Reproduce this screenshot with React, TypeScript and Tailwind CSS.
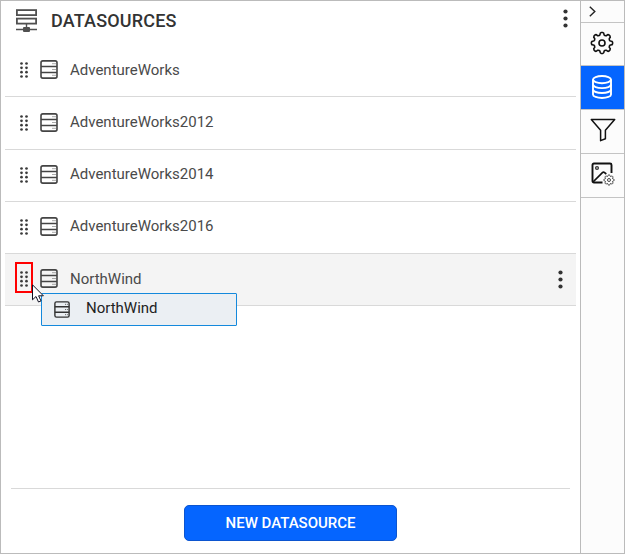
import React from "react";

const DARK = "#444444";

function ServerIcon({ className, color = DARK }: { className: string; color?: string }) {
  return (
    <svg className={className} viewBox="0 0 18 19" fill="none" stroke={color} strokeWidth="1.6">
      <rect x="1" y="0.9" width="16" height="17.2" rx="1.8" />
      <path d="M1 6.5H17M1 12.5H17" />
      <path d="M12.5 3.7h1M14.5 3.7h1M14.5 9.5h1M12.5 9.5h1M12.5 15.3h1M14.5 15.3h1" strokeWidth="0.9" />
    </svg>
  );
}

function DragHandle() {
  return (
    <svg className="h-4 w-2 shrink-0" viewBox="0 0 8 16" fill="#3a3a3a">
      {[1.5, 5.8, 10.2, 14.5].map((y) => (
        <React.Fragment key={y}>
          <circle cx="1.5" cy={y} r="1.35" />
          <circle cx="6.5" cy={y} r="1.35" />
        </React.Fragment>
      ))}
    </svg>
  );
}

function MoreIcon({ className = "" }: { className?: string }) {
  return (
    <svg className={"h-[19px] w-[5px] shrink-0 " + className} viewBox="0 0 5 19" fill="#333333">
      <circle cx="2.5" cy="2.5" r="2.1" />
      <circle cx="2.5" cy="9.5" r="2.1" />
      <circle cx="2.5" cy="16.5" r="2.1" />
    </svg>
  );
}

function NetworkIcon() {
  return (
    <svg className="h-6 w-[21px] shrink-0" viewBox="0 0 21 24" fill="none" stroke="#505050" strokeWidth="1.8">
      <rect x="0.9" y="2.1" width="19.2" height="5" />
      <rect x="0.9" y="10.6" width="19.2" height="5" />
      <path d="M10.5 16v3M0 21.5h21" strokeWidth="1.4" />
      <rect x="7" y="19" width="7" height="5" rx="1" fill="#505050" stroke="none" />
    </svg>
  );
}

// Eight rounded teeth joined by shallow curved valleys.
function gearPath(cx: number, cy: number, outer: number, inner: number) {
  const at = (a: number, r: number) =>
    `${(cx + r * Math.cos(a)).toFixed(2)} ${(cy + r * Math.sin(a)).toFixed(2)}`;
  let d = "";
  for (let i = 0; i < 8; i++) {
    const b = (i * Math.PI) / 4 - Math.PI / 2;
    d += `${i === 0 ? "M" : "L"}${at(b - 0.24, inner + 0.3)}`;
    d += `Q${at(b - 0.2, outer)} ${at(b - 0.08, outer)}`;
    d += `L${at(b + 0.08, outer)}`;
    d += `Q${at(b + 0.2, outer)} ${at(b + 0.24, inner + 0.3)}`;
    d += `Q${at(b + Math.PI / 8, inner - 0.7)} ${at(b + Math.PI / 4 - 0.24, inner + 0.3)}`;
  }
  return d + "Z";
}

function GearIcon() {
  return (
    <svg className="h-6 w-6" viewBox="0 0 24 24" fill="none" stroke="#111111" strokeWidth="1.6" strokeLinejoin="round">
      <path d={gearPath(12, 12, 10.6, 8.2)} />
      <circle cx="12" cy="12" r="3" />
    </svg>
  );
}

function DatabaseIcon() {
  return (
    <svg className="h-6 w-5" viewBox="0 0 20 24" fill="none" stroke="#ffffff" strokeWidth="1.9">
      <ellipse cx="10" cy="4.6" rx="9" ry="3.6" />
      <path d="M1 4.6V19.4C1 21.5 5 23 10 23S19 21.5 19 19.4V4.6" />
      <path d="M1 9.6C1 11.6 5 13.1 10 13.1S19 11.6 19 9.6M1 14.5C1 16.5 5 18 10 18S19 16.5 19 14.5" />
    </svg>
  );
}

function FilterIcon() {
  return (
    <svg className="h-6 w-[26px]" viewBox="0 0 26 24" fill="none" stroke="#111111" strokeWidth="1.5" strokeLinejoin="round">
      <path d="M1.3 1.5H24.7L15.4 12.3V20.7L10.6 22.6V12.3Z" />
    </svg>
  );
}

function ImageSettingsIcon() {
  return (
    <svg className="h-6 w-6" viewBox="0 0 24 24" fill="none" stroke="#111111">
      <path d="M11.5 20.5H3Q1.5 20.5 1.5 19V3Q1.5 1.5 3 1.5H19Q20.5 1.5 20.5 3V11" strokeWidth="1.9" />
      <path d="M2 20L11.4 10.6Q12.5 9.7 13.6 10.6L15.3 12" strokeWidth="1.7" />
      <circle cx="6" cy="6" r="1.4" stroke="#333333" strokeWidth="1.3" />
      <path d={gearPath(18, 18, 5.1, 4)} strokeWidth="0.9" stroke="#333333" />
      <circle cx="18" cy="18" r="1.5" strokeWidth="0.9" stroke="#333333" />
    </svg>
  );
}

const sources = [
  { name: "AdventureWorks", box: "h-[53px] pt-4", label: "pt-px" },
  { name: "AdventureWorks2012", box: "h-[53px] pt-4", label: "" },
  { name: "AdventureWorks2014", box: "h-[52px] pt-[15px]", label: "" },
  { name: "AdventureWorks2016", box: "h-[52px] pt-[15px]", label: "" },
  { name: "NorthWind", box: "h-[52px] pt-[15px] bg-[#f4f4f4]", label: "pt-px", active: true },
];

function DragPreview() {
  return (
    <div className="absolute top-[39px] left-9 flex h-[33px] w-[196px] rounded-[1px] border border-[#1489dc] bg-[#ebeff3] pt-[7px] pl-3">
      <ServerIcon className="h-[17px] w-4" color="#333333" />
      <span className="-mt-px ml-4 h-[17px] text-[15px] leading-[17px] text-[#222222]">NorthWind</span>
    </div>
  );
}

function Cursor() {
  return (
    <svg className="absolute top-[30px] left-[27px] h-[19px] w-3" viewBox="0 0 12 19">
      <path d="M0.5 0.8V15.8L4 12.5L6.5 18L9 16.9L6.6 11.8H11.4Z" fill="#ffffff" stroke="#111122" strokeWidth="1" />
    </svg>
  );
}

export default function App() {
  return (
    <div className="flex h-[554px] w-[625px] overflow-hidden border border-[#bbbbbb] bg-white font-['Roboto',sans-serif]">
      <main className="flex min-w-0 flex-1 flex-col">
        <header className="flex h-[43px] items-start pt-[7px] pr-[12px] pl-[15px]">
          <NetworkIcon />
          <h1 className="ml-[14px] flex-1 text-[18px] leading-[26px] font-medium tracking-[0.17px] text-[#333333]">DATASOURCES</h1>
          <MoreIcon className="mt-px" />
        </header>
        <ul className="mr-1 ml-1">
          {sources.map((s) => (
            <li key={s.name} className={"relative flex items-start border-b border-[#d9d9d9] pl-[15px] " + s.box}>
              <div className="flex h-[19px] items-center">
                <DragHandle />
                <ServerIcon className="ml-3 h-[19px] w-[18px]" />
                <span className={"ml-3 h-[19px] text-[15px] leading-[19px] text-[#4a4a4a] " + s.label}>{s.name}</span>
              </div>
              {s.active && (
                <>
                  <MoreIcon className="mt-px mr-[13px] ml-auto" />
                  <div className="absolute top-2 left-[10px] h-[31px] w-[18px] border-2 border-[#ff0000]" />
                  <DragPreview />
                  <Cursor />
                </>
              )}
            </li>
          ))}
        </ul>
        <footer className="mx-[10px] mt-auto flex h-[65px] justify-center border-t border-[#d9d9d9] pt-4">
          <button className="h-9 w-[213px] rounded-[5px] border border-[#0c55cf] bg-[#0565ff] text-[15px] font-medium tracking-[-0.01px] text-white">
            NEW DATASOURCE
          </button>
        </footer>
      </main>
      <aside className="flex w-11 shrink-0 flex-col border-l border-[#bbbbbb] bg-[#fcfcfc]">
        <div className="flex h-[22px] items-center border-b border-[#c4c4c4] pl-2">
          <svg className="h-[11px] w-[7px]" viewBox="0 0 7 11" fill="none" stroke="#222222" strokeWidth="1.4">
            <path d="M0.8 0.8L5.8 5.5L0.8 10.2" />
          </svg>
        </div>
        <div className="flex h-[43px] items-start justify-center border-b border-[#c4c4c4] pt-2 pr-px">
          <GearIcon />
        </div>
        <div className="flex h-11 items-start justify-center border-b border-[#c4c4c4] bg-[#0565ff] pt-[9px] pr-px">
          <DatabaseIcon />
        </div>
        <div className="flex h-11 items-start justify-center border-b border-[#c4c4c4] pt-2">
          <FilterIcon />
        </div>
        <div className="flex h-11 items-start justify-center border-b border-[#c4c4c4] pt-2">
          <ImageSettingsIcon />
        </div>
      </aside>
    </div>
  );
}
